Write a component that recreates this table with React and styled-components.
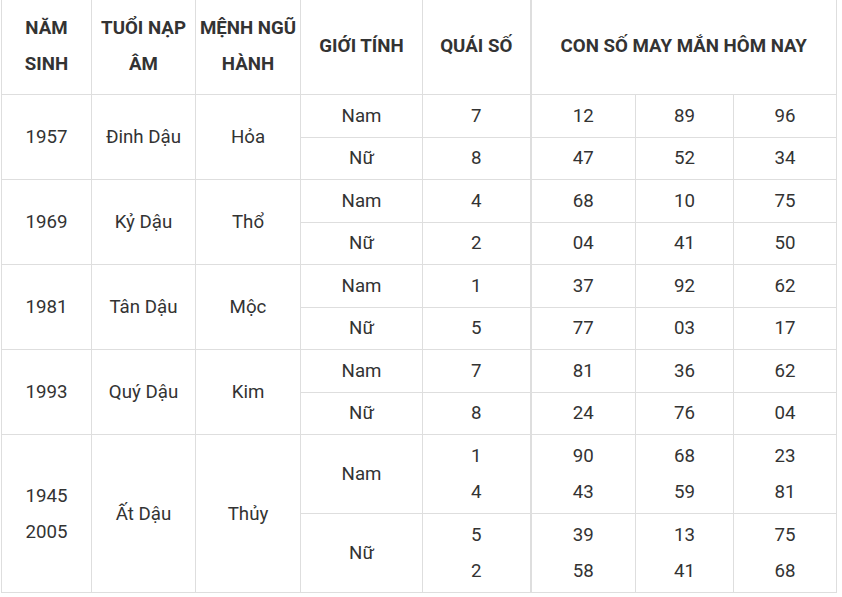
import React from "react"
import styled, { createGlobalStyle } from "styled-components"

const GlobalStyle = createGlobalStyle`
  body {
    margin: 0;
    background: #fff;
    font-family: Roboto, "Noto Sans", sans-serif;
    color: #333;
  }
`;

const Table = styled.table`
  border-collapse: collapse;
  table-layout: fixed;
  width: 836px;
  margin-left: 1px;
  font-size: 18.7px;
  line-height: 36px;
`;

const HeadCell = styled.th`
  height: 91px;
  padding: 0 2px 3px;
  font-weight: 700;
  color: #333;
  text-align: center;
  vertical-align: middle;
  border: 1px solid #dedede;
  border-top: none;
  border-left-width: ${(p) => (p.$thick ? "2px" : "1px")};
`;

const Row = styled.tr`
  height: ${(p) => (p.$tall ? "79px" : "42.5px")};
`;

const Cell = styled.td`
  padding: 0 2px;
  text-align: center;
  vertical-align: middle;
  border: 1px solid #dedede;
  border-left-width: ${(p) => (p.$thick ? "2px" : "1px")};
`;

const widths = [90, 104, 105, 122, 108, 105, 98, 103];

const groups = [
  {
    year: ["1957"], tuoi: "Đinh Dậu", menh: "Hỏa",
    rows: [
      { g: "Nam", q: ["7"], n: [["12"], ["89"], ["96"]] },
      { g: "Nữ", q: ["8"], n: [["47"], ["52"], ["34"]] },
    ],
  },
  {
    year: ["1969"], tuoi: "Kỷ Dậu", menh: "Thổ",
    rows: [
      { g: "Nam", q: ["4"], n: [["68"], ["10"], ["75"]] },
      { g: "Nữ", q: ["2"], n: [["04"], ["41"], ["50"]] },
    ],
  },
  {
    year: ["1981"], tuoi: "Tân Dậu", menh: "Mộc",
    rows: [
      { g: "Nam", q: ["1"], n: [["37"], ["92"], ["62"]] },
      { g: "Nữ", q: ["5"], n: [["77"], ["03"], ["17"]] },
    ],
  },
  {
    year: ["1993"], tuoi: "Quý Dậu", menh: "Kim",
    rows: [
      { g: "Nam", q: ["7"], n: [["81"], ["36"], ["62"]] },
      { g: "Nữ", q: ["8"], n: [["24"], ["76"], ["04"]] },
    ],
  },
  {
    year: ["1945", "2005"], tuoi: "Ất Dậu", menh: "Thủy", tall: true,
    rows: [
      { g: "Nam", q: ["1", "4"], n: [["90", "43"], ["68", "59"], ["23", "81"]] },
      { g: "Nữ", q: ["5", "2"], n: [["39", "58"], ["13", "41"], ["75", "68"]] },
    ],
  },
];

const Lines = ({ items }) =>
  items.map((t, i) => (
    <React.Fragment key={i}>
      {i > 0 && <br />}
      {t}
    </React.Fragment>
  ));

export default function App() {
  return (
    <>
      <GlobalStyle />
      <Table>
        <colgroup>
          {widths.map((w, i) => (
            <col key={i} style={{ width: w }} />
          ))}
        </colgroup>
        <thead>
          <tr>
            <HeadCell>NĂM<br />SINH</HeadCell>
            <HeadCell>TUỔI NẠP<br />ÂM</HeadCell>
            <HeadCell>MỆNH NGŨ<br />HÀNH</HeadCell>
            <HeadCell>GIỚI TÍNH</HeadCell>
            <HeadCell>QUÁI SỐ</HeadCell>
            <HeadCell colSpan={3} $thick>CON SỐ MAY MẮN HÔM NAY</HeadCell>
          </tr>
        </thead>
        <tbody>
          {groups.map((grp) =>
            grp.rows.map((r, i) => (
              <Row key={grp.tuoi + i} $tall={grp.tall}>
                {i === 0 && (
                  <>
                    <Cell rowSpan={2}><Lines items={grp.year} /></Cell>
                    <Cell rowSpan={2}>{grp.tuoi}</Cell>
                    <Cell rowSpan={2}>{grp.menh}</Cell>
                  </>
                )}
                <Cell>{r.g}</Cell>
                <Cell><Lines items={r.q} /></Cell>
                {r.n.map((v, j) => (
                  <Cell key={j} $thick={j === 0}><Lines items={v} /></Cell>
                ))}
              </Row>
            ))
          )}
        </tbody>
      </Table>
    </>
  );
}
